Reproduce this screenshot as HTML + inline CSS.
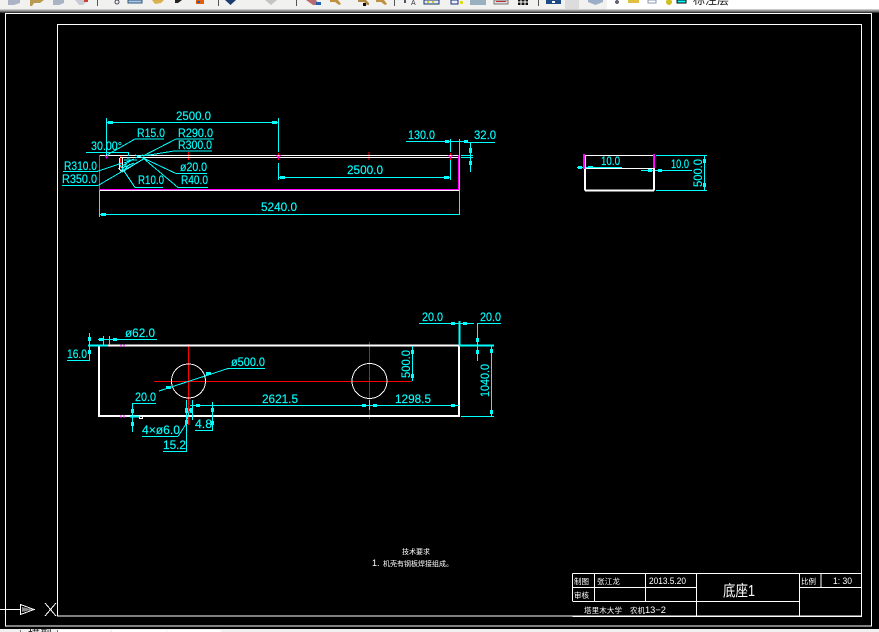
<!DOCTYPE html>
<html><head><meta charset="utf-8"><style>
html,body{margin:0;padding:0;background:#000;width:879px;height:632px;overflow:hidden}
svg{display:block;position:absolute;left:0;top:0}
text{font-family:"Liberation Sans","Noto Sans CJK SC",sans-serif}
.c text{fill:#0ff;font-size:12px;stroke:#0ff;stroke-width:.15}
.c .l{stroke:#0ff;stroke-width:1;fill:none}
.w{stroke:#fff;fill:none}
.r{stroke:#f00;fill:none}
.m{stroke:#f0f;fill:none}
.t text{fill:#fff;font-size:9.5px}
</style></head><body>
<svg width="879" height="632" viewBox="0 0 879 632" shape-rendering="crispEdges">
<rect width="879" height="632" fill="#000"/>
<!-- toolbar -->
<rect width="879" height="9" fill="#f1f1ef"/>
<rect y="9" width="879" height="1" fill="#c8c8c8"/><rect y="10" width="879" height="1" fill="#9a9a9a"/><rect y="11" width="879" height="1" fill="#707070"/><rect y="12" width="879" height="1" fill="#333"/>
<g fill="#555"><rect x="97" width="1" height="6"/><rect x="218" width="1" height="6"/><rect x="296" width="1" height="6"/><rect x="394" width="1" height="6"/><rect x="538" width="1" height="6"/></g>
<rect x="565" width="14" height="9" fill="#dcdcdc"/>
<rect x="607" width="272" height="9" fill="#fff"/>
<g shape-rendering="auto">
<path d="M8 0h12v3l-6 2h-6z" fill="#aab4c4"/><path d="M30 0h14l-4 3h-6l-2 3h-2z" fill="#b89a50"/><path d="M53 0h11v3l-5 2h-6z" fill="#aab4c4"/><path d="M75 0h13l-5 5h-4z" fill="#c8ccd4"/><rect x="84" width="4" height="2" fill="#d04030"/>
<circle cx="117" cy="2" r="2" fill="none" stroke="#445"/><rect x="128" width="14" height="3" fill="#a8c8e8" stroke="#357"/><path d="M152 0h12l-3 3-6 1z" fill="#d8b050"/><path d="M175 0h7l-4 3h-3z" fill="#222"/><rect x="196" width="8" height="4" fill="#e06010"/><rect x="197" y="1" width="3" height="2" fill="#2060c0"/>
<path d="M225 0h11l-5.500 5z" fill="#1c3c70"/><path d="M265 0h12l-6 5z" fill="#c4c4c4"/>
<path d="M306 0h10l2 3h3v2h-8z" fill="#b86a70"/><path d="M316 2h5v3h-5z" fill="#2060b0"/>
<path d="M330 0h8l3 4-2 1-4-3h-5z" fill="#c09040"/><path d="M358 0h8l3 3v2h-2l-3-3h-6z" fill="#b08a40"/><rect x="363" y="3" width="3" height="3" fill="#111"/><path d="M376 0h8l3 4-2 1-4-3h-5z" fill="#c09040"/>
</g>
<rect x="404" y="0" width="2" height="3" fill="#556"/><text x="411" y="5" font-size="7" fill="#334">A</text>
<rect x="424" y="0" width="15" height="4" fill="#e8e8f0" stroke="#137"/><rect x="427" y="1" width="2" height="2" fill="#cc2"/><rect x="432" y="1" width="2" height="2" fill="#cc2"/>
<rect x="451" y="0" width="7" height="4" fill="#eef" stroke="#137"/><rect x="460" y="1" width="3" height="3" fill="#dd2"/>
<rect x="470" y="0" width="16" height="5" fill="#9ab0c0"/><rect x="494" y="0" width="14" height="4" fill="#ddd" stroke="#777"/><rect x="496" y="1" width="10" height="1" fill="#c03030"/>
<rect x="518" y="0" width="10" height="5" fill="#111"/><path d="M518 2h10M521 0v5M525 0v5" stroke="#fff"/>
<rect x="546" y="0" width="15" height="4" fill="#1c4a86"/><rect x="552" y="1" width="3" height="2" fill="#fff"/>
<path d="M588 0h15v2l-7.500 3-7.500-3z" fill="#9aaec8"/>
<circle cx="617" cy="2" r="2" fill="#667"/><path d="M628 0h11v3h-11z" fill="#e0c040"/><rect x="648" y="0" width="8" height="3" fill="#fff" stroke="#8898b8"/><circle cx="669" cy="2" r="3" fill="#d0c020"/><rect x="677" y="0" width="9" height="3" fill="#0ff" stroke="#000"/>
<text x="693" y="4" font-size="12" fill="#222">标注层</text>
<!-- frames -->
<rect x="5.500" y="13.500" width="866" height="612.500" class="w"/>
<rect x="57.500" y="24.500" width="804" height="591.500" class="w"/>
<rect y="629" width="879" height="3" fill="#f0f0f0"/>
<g fill="#fff"><rect x="58" y="630" width="52" height="2"/><rect x="112" y="630" width="54" height="2"/><rect x="167" y="630" width="54" height="2"/></g>
<rect x="20" y="630" width="1" height="2" fill="#777"/><rect x="57" y="630" width="1" height="2" fill="#777"/>
<text x="28" y="639" font-size="12" fill="#222">模型</text>
<!-- UCS -->
<path d="M0 609.500H20M20.500 604.500L34 609.500L20.500 614.500ZM45 603L56 616M56 603L45 616" class="w" stroke-width="1"/>
<path d="M22 607L33 609.500L22 612Z" fill="#888"/>

<!-- top view -->
<path d="M120.500 156V168M188.500 152V160M278.500 153V160M369 152V160M450.500 153V160" class="r"/>
<path d="M99 155.500H459M120 157.500H459" class="w"/>
<path d="M99.500 190.500H459" stroke="#fff" stroke-width="1"/><path d="M99.500 189.500H459" class="m"/>
<path d="M99.500 155V190M458.500 155V190M459.500 155V190" class="m"/>
<path d="M119.500 158V170M122.500 158V172M118.500 168L122 172M122 172L145 158" class="w"/>
<path d="M105 155l1.500 3 1.500-3M276.500 155l2 3 2-3M448.500 155l2 3 2-3" class="m"/>
<g class="c">
<path class="l" d="M106.500 118V155M278.500 118V152M278.500 163V180M106.500 122.500H278.500M278.500 177.500H450.500M450.500 139V152M450.500 160V180M459.500 139V215M406 141.500H464M465 142.500H495M470.500 142V172M461 155.500H473M461 157.500H473"/>
<path class="l" d="M99.500 190V217M99.500 214.500H459.500"/>
<path class="l" d="M135 139H164M135 139L107 155M176 139H214M176 139L143 156M174 151H212M174 151L143 156M86 152.500H128.500V156M63 171.500H97M97 171.500L122 163M62 185.500H98M98 185.500L145 158M135 187.500H163M135 187.500L120 165M178 187.500H208M178 187.500L143 158M176 173.500H207M176 173.500L143 158"/>
<path class="l" d="M124 160L137 160M124 163L134 159M122 166L132 160M122 168L134 163M124 170L130 164M121 171L127 163M127 158H130M135 155L143 158M135 158L143 155"/>
<g fill="#0ff"><rect x="108" y="121" width="5" height="3"/><rect x="272" y="121" width="5" height="3"/><rect x="280" y="176" width="5" height="3"/><rect x="444" y="176" width="5" height="3"/><rect x="445" y="140" width="4" height="3"/><rect x="464" y="140" width="4" height="3"/><rect x="469" y="148" width="3" height="5"/><rect x="469" y="161" width="3" height="4"/><rect x="101" y="213" width="5" height="3"/></g>
<text x="176" y="120" textLength="35" lengthAdjust="spacingAndGlyphs">2500.0</text>
<text x="347" y="174" textLength="36" lengthAdjust="spacingAndGlyphs">2500.0</text>
<text x="261" y="211" textLength="36" lengthAdjust="spacingAndGlyphs">5240.0</text>
<text x="408" y="139" textLength="27" lengthAdjust="spacingAndGlyphs">130.0</text>
<text x="474" y="139" textLength="22" lengthAdjust="spacingAndGlyphs">32.0</text>
<text x="137" y="137" textLength="28" lengthAdjust="spacingAndGlyphs">R15.0</text>
<text x="178" y="137" textLength="35" lengthAdjust="spacingAndGlyphs">R290.0</text>
<text x="178" y="149" textLength="34" lengthAdjust="spacingAndGlyphs">R300.0</text>
<text x="91" y="150" textLength="31" lengthAdjust="spacingAndGlyphs">30.00°</text>
<text x="64" y="170" textLength="33" lengthAdjust="spacingAndGlyphs">R310.0</text>
<text x="62" y="183" textLength="35" lengthAdjust="spacingAndGlyphs">R350.0</text>
<text x="138" y="184" textLength="26" lengthAdjust="spacingAndGlyphs">R10.0</text>
<text x="181" y="184" textLength="27" lengthAdjust="spacingAndGlyphs">R40.0</text>
<text x="180" y="171" textLength="27" lengthAdjust="spacingAndGlyphs">ø20.0</text>

<!-- side view dims -->
<path class="l" d="M577 167.500H622M641 170.500H692M656 155.500H707M656 190.500H707M704.500 155V190"/>
<g fill="#0ff"><rect x="578" y="166" width="4" height="3"/><rect x="588" y="166" width="5" height="3"/><rect x="648" y="169" width="4" height="3"/><rect x="658" y="169" width="4" height="3"/><rect x="703" y="159" width="3" height="4"/><rect x="703" y="183" width="3" height="4"/></g>
<text x="601" y="165" textLength="19" lengthAdjust="spacingAndGlyphs">10.0</text>
<text x="671" y="168" textLength="18" lengthAdjust="spacingAndGlyphs">10.0</text>
<text transform="translate(702,187) rotate(-90)" textLength="28" lengthAdjust="spacingAndGlyphs">500.0</text>
</g>
<path d="M585 155.500H654V190.500H585Z" stroke="#fff" stroke-width="1" fill="none"/>
<path d="M585 190.500H654" stroke="#fff" stroke-width="2"/>
<path d="M585 168.500H654" class="w"/><path d="M585 156V190M654 156V190" stroke="#fff" stroke-width="2" fill="none"/>
<path d="M584 154V169M654 154V168" stroke="#f0f" stroke-width="2" fill="none"/>

<!-- bottom view -->
<path d="M154 381.500H412M188.500 344V425M369.500 342V419" class="r"/>
<rect x="99" y="345.500" width="360" height="70.500" fill="none" stroke="#fff" stroke-width="2"/>
<circle cx="188.500" cy="381" r="17" class="w"/><circle cx="369.500" cy="381" r="17.500" class="w"/>
<path d="M121 344.500V347M124 344.500V347M121 415V418M124 415V418" class="m"/>
<g class="c">
<path class="l" d="M98 339.500H157M89.500 333V360M67 360.500H90M103.500 336V345M109.500 336V345M228 368.500H265M228 368.500L159 391M132 403.500H156M132.500 403V432M142 436.500H178M178 436.500L186 424L190 408M163 451.500H187M186.500 451V400M195 430.500H212M212.500 431V402M192.500 400V420M190 405.500H459M412.500 346V381M491.500 346V416M461 416.500H494M419 323.500H474M477 323.500H501M477.500 323V361M369.500 400V410"/>
<path d="M88 345.500H108M459.500 321V345M459 345.500H494" stroke="#0ff" stroke-width="2" fill="none"/>
<path d="M130 416.500H139" stroke="#0ff" stroke-width="2" fill="none"/>
<rect x="139.500" y="415.500" width="3" height="3" fill="none" stroke="#fff"/>
<g fill="#0ff"><rect x="88" y="337" width="3" height="4"/><rect x="88" y="350" width="3" height="4"/><rect x="99" y="338" width="4" height="3"/><rect x="113" y="338" width="4" height="3"/><rect x="131" y="409" width="3" height="4"/><rect x="131" y="422" width="3" height="4"/><rect x="206" y="372" width="5" height="3"/><rect x="166" y="386" width="5" height="3"/><rect x="185" y="408" width="3" height="5"/><rect x="185" y="420" width="3" height="4"/><rect x="190" y="408" width="3" height="5"/><rect x="196" y="404" width="4" height="3"/><rect x="211" y="408" width="3" height="4"/><rect x="211" y="421" width="3" height="4"/><rect x="362" y="404" width="4" height="3"/><rect x="373" y="404" width="4" height="3"/><rect x="451" y="404" width="4" height="3"/><rect x="411" y="350" width="3" height="4"/><rect x="411" y="374" width="3" height="4"/><rect x="490" y="349" width="3" height="4"/><rect x="490" y="410" width="3" height="4"/><rect x="451" y="322" width="4" height="3"/><rect x="463" y="322" width="4" height="3"/><rect x="476" y="338" width="3" height="4"/><rect x="476" y="350" width="3" height="4"/></g>
<text x="125" y="337" textLength="30" lengthAdjust="spacingAndGlyphs">ø62.0</text>
<text x="67" y="358" textLength="20" lengthAdjust="spacingAndGlyphs">16.0</text>
<text x="231" y="366" textLength="34" lengthAdjust="spacingAndGlyphs">ø500.0</text>
<text x="135" y="401" textLength="21" lengthAdjust="spacingAndGlyphs">20.0</text>
<text x="142" y="434" textLength="38" lengthAdjust="spacingAndGlyphs">4×ø6.0</text>
<text x="163" y="449" textLength="23" lengthAdjust="spacingAndGlyphs">15.2</text>
<text x="195" y="428" textLength="17" lengthAdjust="spacingAndGlyphs">4.8</text>
<text x="262" y="403" textLength="36" lengthAdjust="spacingAndGlyphs">2621.5</text>
<text x="395" y="403" textLength="36" lengthAdjust="spacingAndGlyphs">1298.5</text>
<text x="422" y="321" textLength="21" lengthAdjust="spacingAndGlyphs">20.0</text>
<text x="480" y="321" textLength="21" lengthAdjust="spacingAndGlyphs">20.0</text>
<text transform="translate(410,378) rotate(-90)" textLength="28" lengthAdjust="spacingAndGlyphs">500.0</text>
<text transform="translate(489,397) rotate(-90)" textLength="33" lengthAdjust="spacingAndGlyphs">1040.0</text>
</g>

<!-- note -->
<g class="t">
<text x="402" y="554" style="font-size:7px" textLength="28">技术要求</text>
<text x="372" y="566" style="font-size:9px">1.</text>
<text x="383" y="566" style="font-size:7px" textLength="70">机壳有钢板焊接组成。</text>
</g>

<!-- title block -->
<path d="M572.500 573.500H861.500V616.500H572.500M572.500 573.500V601.500M573 587.500H696M573 601.500H800M594.500 573V601M645.500 573V601M696.500 573V616M799.500 573V616M821 573V587.500M800 587.500H861M861.500 573V616" class="w"/>
<g class="t">
<text x="574" y="584" style="font-size:7.500px" textLength="15">制图</text>
<text x="574" y="598" style="font-size:7.500px" textLength="15">审核</text>
<text x="597" y="584" style="font-size:7.500px" textLength="23">张江龙</text>
<text x="649" y="584" textLength="37" lengthAdjust="spacingAndGlyphs" style="font-size:9.500px">2013.5.20</text>
<text x="723" y="596" style="font-size:15.500px" textLength="32" lengthAdjust="spacingAndGlyphs">底座1</text>
<text x="801" y="584" style="font-size:7.500px" textLength="15">比例</text>
<text x="833" y="584" textLength="19" lengthAdjust="spacingAndGlyphs" style="font-size:9.500px">1: 30</text>
<text x="584" y="613" style="font-size:7.500px" textLength="38">塔里木大学</text>
<text x="630" y="613" style="font-size:7.500px" textLength="15">农机</text>
<text x="645" y="613" textLength="21" lengthAdjust="spacingAndGlyphs" style="font-size:9.500px">13−2</text>
</g>
</svg>
</body></html>
